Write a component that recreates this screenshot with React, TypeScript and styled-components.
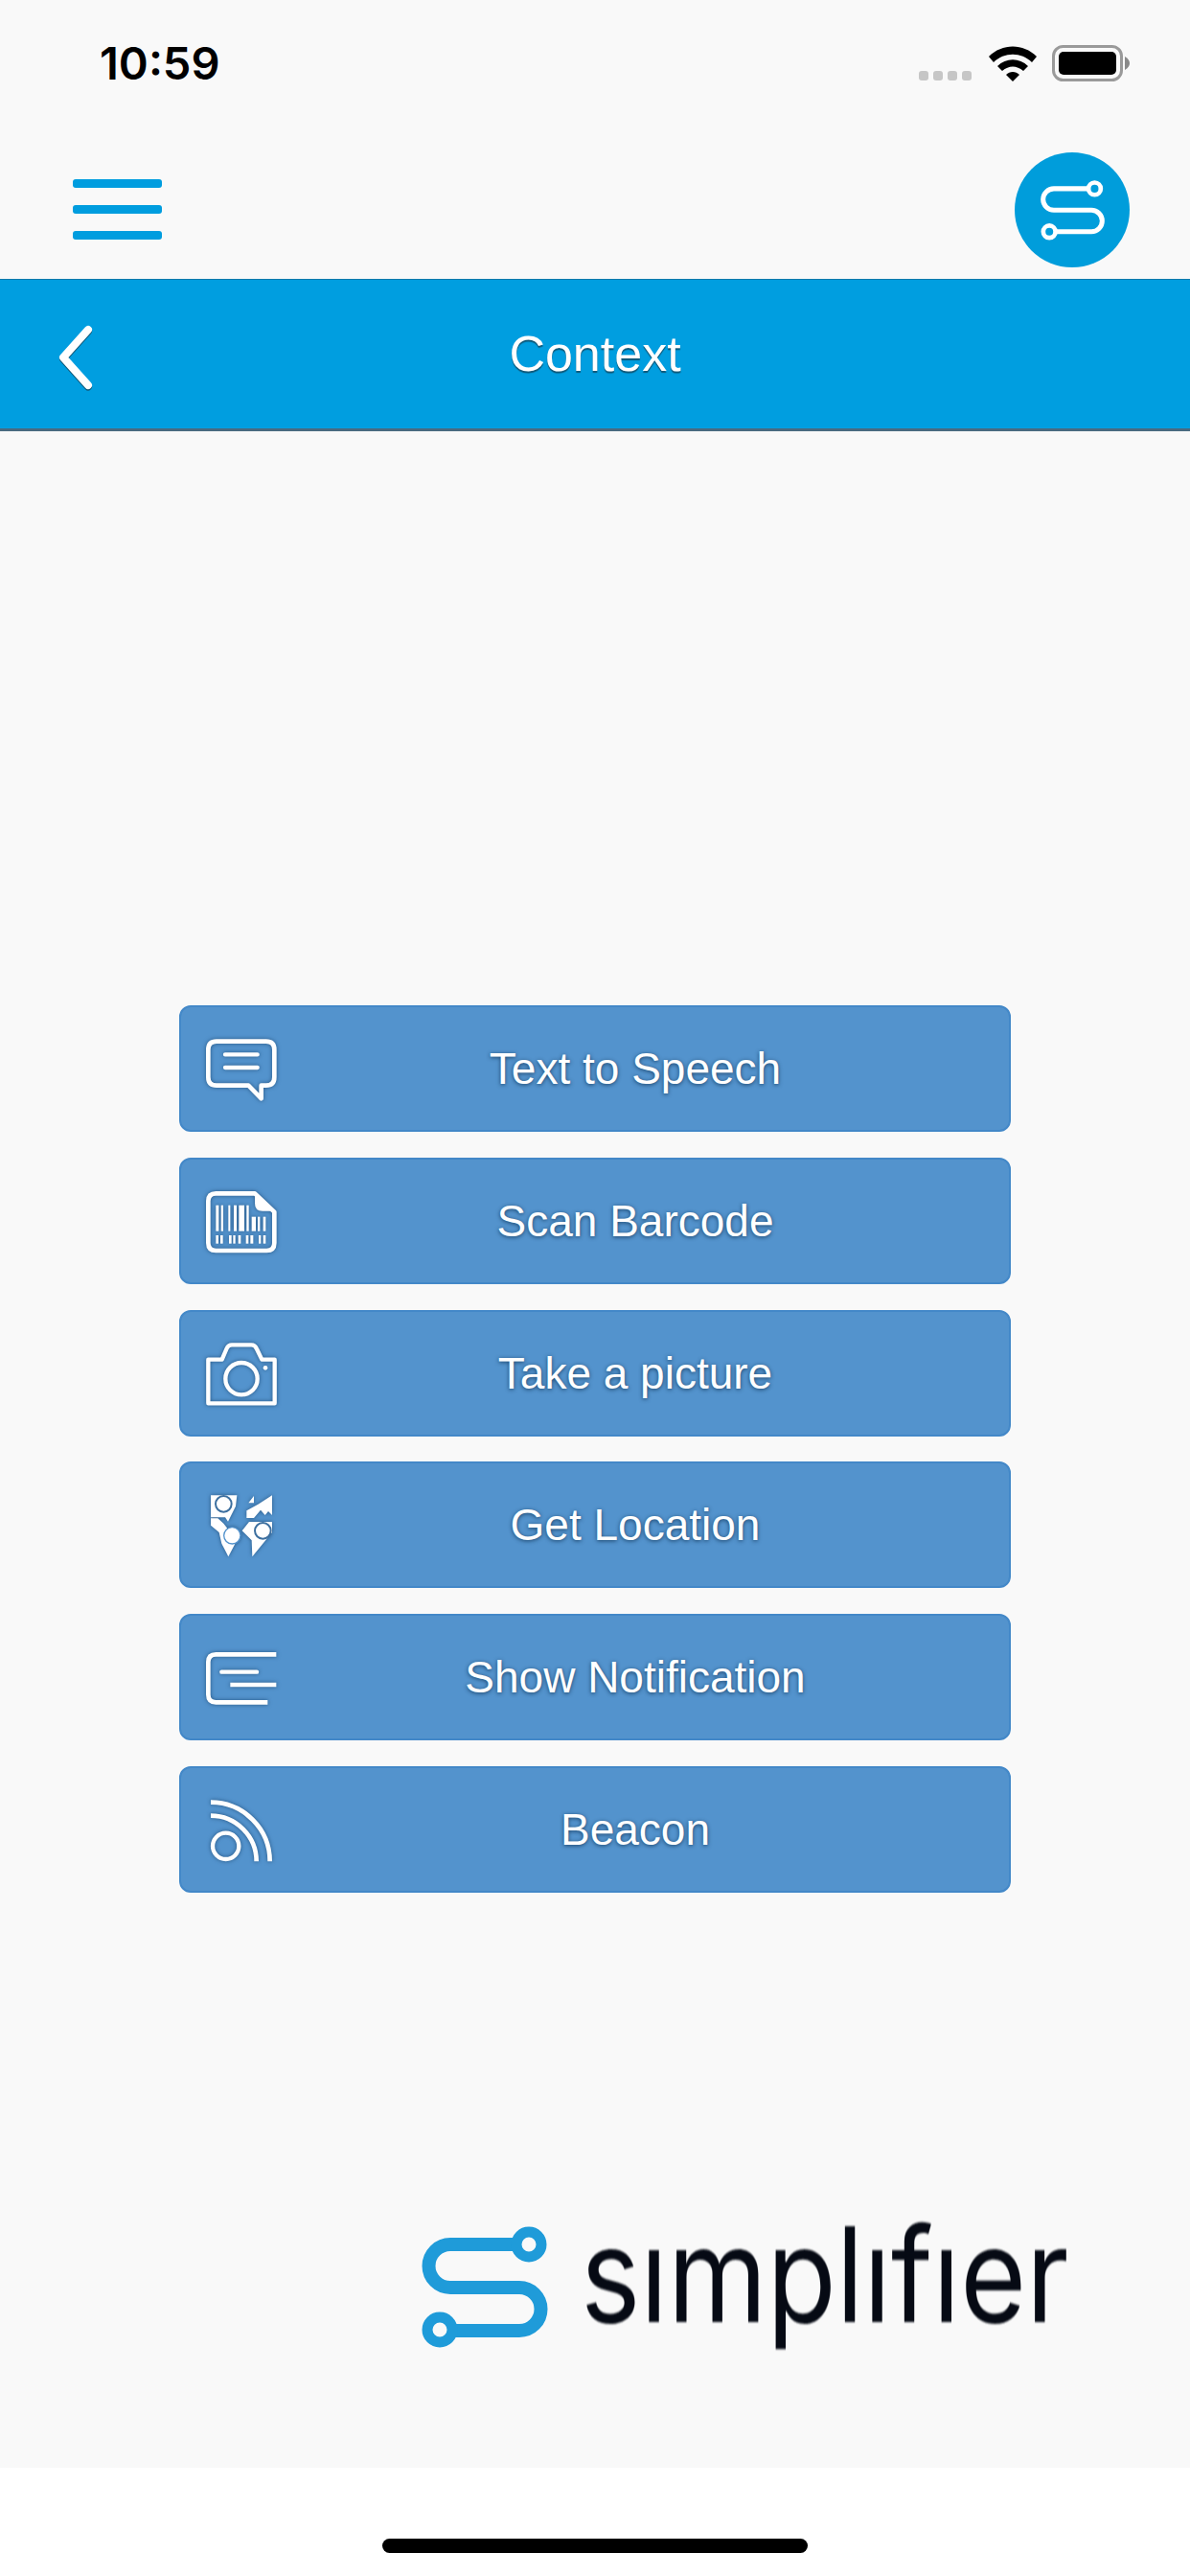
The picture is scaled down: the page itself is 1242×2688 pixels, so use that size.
import React from "react";
import styled, { createGlobalStyle } from "styled-components";

const GlobalStyle = createGlobalStyle`
  html, body {
    margin: 0;
    padding: 0;
    background: #ffffff;
  }
  * {
    box-sizing: border-box;
  }
`;

const Page = styled.div`
  width: 1242px;
  height: 2688px;
  display: flex;
  flex-direction: column;
  font-family: "Liberation Sans", Arial, sans-serif;
  background: #ffffff;
  overflow: hidden;
`;

const Screen = styled.div`
  height: 2575px;
  display: flex;
  flex-direction: column;
  background: #f9f9f9;
`;

const StatusBar = styled.div`
  height: 159px;
  flex-shrink: 0;
  display: flex;
  justify-content: space-between;
  align-items: flex-start;
  padding: 38px 62px 0 104px;
`;

const Time = styled.div`
  font-family: Inter, "Liberation Sans", sans-serif;
  font-size: 47px;
  line-height: 56px;
  font-weight: 600;
  color: #000000;
`;

const StatusIcons = styled.div`
  display: flex;
  align-items: flex-start;
  padding-top: 9px;
`;

const SignalDots = styled.div`
  display: flex;
  gap: 5px;
  margin: 27px 17px 0 0;
`;

const SignalDot = styled.span`
  width: 10px;
  height: 10px;
  border-radius: 3px;
  background: #c6c6c6;
`;

const WifiIcon = styled.svg`
  width: 52px;
  height: 38px;
  margin-right: 15px;
`;

const BatteryIcon = styled.svg`
  width: 82px;
  height: 38px;
`;

const TopBar = styled.div`
  height: 132px;
  flex-shrink: 0;
  display: flex;
  justify-content: space-between;
  padding: 0 63px 0 76px;
`;

const Hamburger = styled.div`
  display: flex;
  flex-direction: column;
  gap: 18px;
  padding-top: 28px;
`;

const HamburgerLine = styled.span`
  width: 93px;
  height: 9px;
  border-radius: 3px;
  background: #009ddf;
`;

const Badge = styled.svg`
  width: 120px;
  height: 120px;
`;

const Header = styled.div`
  height: 159px;
  flex-shrink: 0;
  position: relative;
  display: flex;
  align-items: center;
  justify-content: center;
  background: #009ee0;
  border-top: 1px solid #0079ab;
  border-bottom: 3px solid #4a6a80;
`;

const BackIcon = styled.svg`
  position: absolute;
  left: 58px;
  top: 46px;
  width: 42px;
  height: 72px;
`;

const Title = styled.h1`
  margin: 0 0 2px;
  font-size: 52px;
  line-height: 60px;
  font-weight: 400;
  color: #ffffff;
  text-shadow: 0 2px 1px #0f5878;
`;

const Main = styled.div`
  flex: 1;
  display: flex;
  flex-direction: column;
  padding-top: 599px;
`;

const ButtonList = styled.div`
  display: flex;
  flex-direction: column;
  gap: 26.8px;
  width: 868px;
  margin-left: 187px;
`;

const ActionButton = styled.div`
  height: 132px;
  flex-shrink: 0;
  display: flex;
  align-items: center;
  padding: 0 16px 0 26px;
  background: #5393cd;
  border: 2px solid #4388c8;
  border-radius: 12px;
`;

const ButtonIcon = styled.svg`
  width: 74px;
  height: 74px;
  flex-shrink: 0;
  filter: drop-shadow(0 0 2px rgba(20, 60, 100, 0.7));
`;

const ButtonLabel = styled.span`
  flex: 1;
  text-align: center;
  font-size: 46px;
  line-height: 54px;
  color: #ffffff;
  text-shadow: 0 1px 4px rgba(15, 50, 85, 0.85);
`;

const LogoRow = styled.div`
  margin-top: auto;
  display: flex;
  align-items: flex-start;
  padding: 0 0 120px 435px;
`;

const LogoMark = styled.svg`
  width: 145px;
  height: 138px;
  flex-shrink: 0;
  filter: blur(0.7px);
`;

const Wordmark = styled.div`
  margin: -27px 0 -30px 26px;
  font-family: Inter, "Noto Sans", sans-serif;
  font-size: 137px;
  line-height: 166px;
  font-variant-ligatures: none;
  color: #060a14;
  white-space: nowrap;
  transform: scaleX(0.862);
  transform-origin: left center;
  filter: blur(0.8px);
`;

const HomeArea = styled.div`
  flex: 1;
  display: flex;
  justify-content: center;
  padding-top: 74px;
`;

const HomeIndicator = styled.div`
  width: 444px;
  height: 15px;
  border-radius: 8px;
  background: #000000;
`;

const SpeechIcon = () => (
  <ButtonIcon viewBox="135 145 222 222">
    <path
      d="M168 171H323Q349 171 349 197V283Q349 309 323 309H308V350L268 309H168Q142 309 142 283V197Q142 171 168 171Z"
      fill="none"
      stroke="#fff"
      strokeWidth="14"
      strokeLinejoin="round"
    />
    <path d="M195 212H296M195 253H296" stroke="#fff" strokeWidth="13" strokeLinecap="round" />
  </ButtonIcon>
);

const tallBars = [
  [166, 9, 684],
  [182, 7, 684],
  [205, 6, 684],
  [222, 9, 684],
  [238, 17, 684],
  [262, 7, 684],
  [278, 13, 720],
  [297, 7, 720],
  [314, 8, 720],
];
const shortBars = [
  [166, 8],
  [180, 8],
  [207, 8],
  [220, 7],
  [236, 8],
  [260, 8],
  [274, 9],
  [300, 7],
  [314, 8],
];

const BarcodeIcon = () => (
  <ButtonIcon viewBox="135 622 222 222">
    <path
      d="M166 647H288L349 705V802Q349 826 325 826H166Q142 826 142 802V671Q142 647 166 647Z"
      fill="none"
      stroke="#fff"
      strokeWidth="14"
      strokeLinejoin="round"
    />
    <path d="M288 647L349 702H312Q288 702 288 678Z" fill="#fff" />
    {tallBars.map(([x, w, y]) => (
      <rect key={x} x={x} y={y} width={w} height={765 - y} fill="#fff" />
    ))}
    {shortBars.map(([x, w]) => (
      <rect key={x} x={x} y={778} width={w} height={26} fill="#fff" />
    ))}
  </ButtonIcon>
);

const CameraIcon = () => (
  <ButtonIcon viewBox="135 139 222 222">
    <path
      d="M142 344V207H185L200 172Q205 161 216 161H277Q288 161 293 172L310 207H350V344Z"
      fill="none"
      stroke="#fff"
      strokeWidth="13"
      strokeLinejoin="round"
    />
    <circle cx="246" cy="267" r="50" fill="none" stroke="#fff" strokeWidth="13" />
    <circle cx="321" cy="233" r="7" fill="#fff" />
  </ButtonIcon>
);

const LocationIcon = () => (
  <ButtonIcon viewBox="135 615 222 222">
    <path d="M150 634H232L228 668L204 716L195 703H150Z" fill="#fff" />
    <path d="M150 706H172L190 722L200 735L226 786L205 826L184 785L176 750L150 728Z" fill="#fff" />
    <path d="M268 658L285 636V658ZM262 705V682L298 662L342 634V696L330 684L320 696L306 680L285 705Z" fill="#fff" />
    <path d="M248 745L270 717H342V750L280 826L278 775Z" fill="#fff" />
    <circle cx="190" cy="661" r="25" fill="#fff" stroke="#3c6f9f" strokeWidth="6" />
    <circle cx="217" cy="760" r="26" fill="#fff" stroke="#5393cd" strokeWidth="4" />
    <circle cx="313" cy="745" r="25" fill="#fff" stroke="#3c6f9f" strokeWidth="6" />
  </ButtonIcon>
);

const NotificationIcon = () => (
  <ButtonIcon viewBox="135 132 222 222">
    <path
      d="M355 172H166Q142 172 142 196V298Q142 322 166 322H328"
      fill="none"
      stroke="#fff"
      strokeWidth="14"
    />
    <path d="M184 227H294" stroke="#fff" strokeWidth="13" strokeLinecap="round" />
    <path d="M211 267H355" stroke="#fff" strokeWidth="13" />
  </ButtonIcon>
);

const BeaconIcon = () => (
  <ButtonIcon viewBox="135 608 222 222">
    <path
      d="M150 634A185 185 0 0 1 335 819M150 676A143 143 0 0 1 293 819"
      fill="none"
      stroke="#fff"
      strokeWidth="14"
    />
    <circle cx="197" cy="771" r="41" fill="none" stroke="#fff" strokeWidth="13" />
  </ButtonIcon>
);

const actions = [
  { label: "Text to Speech", icon: <SpeechIcon /> },
  { label: "Scan Barcode", icon: <BarcodeIcon /> },
  { label: "Take a picture", icon: <CameraIcon /> },
  { label: "Get Location", icon: <LocationIcon /> },
  { label: "Show Notification", icon: <NotificationIcon /> },
  { label: "Beacon", icon: <BeaconIcon /> },
];

const App = () => {
  return (
    <Page>
      <GlobalStyle />
      <Screen>
        <StatusBar>
          <Time>10:59</Time>
          <StatusIcons>
            <SignalDots>
              <SignalDot />
              <SignalDot />
              <SignalDot />
              <SignalDot />
            </SignalDots>
            <WifiIcon viewBox="0 0 52 38">
              <path d="M1 12C15 -2 37 -2 51 12L46 18C35 7 17 7 6 18Z" fill="#000" />
              <path d="M10 22C19 13 33 13 42 22L37 27C30 21 22 21 15 27Z" fill="#000" />
              <path d="M19 31C23 27 29 27 33 31L26 38Z" fill="#000" />
            </WifiIcon>
            <BatteryIcon viewBox="0 0 82 38">
              <rect x="1.5" y="1.5" width="71" height="35" rx="10" fill="none" stroke="#9a9a9a" strokeWidth="3" />
              <rect x="7" y="7" width="60" height="24" rx="5" fill="#000" />
              <path d="M76 12Q81 15 81 19Q81 23 76 26Z" fill="#8a8a8a" />
            </BatteryIcon>
          </StatusIcons>
        </StatusBar>
        <TopBar>
          <Hamburger>
            <HamburgerLine />
            <HamburgerLine />
            <HamburgerLine />
          </Hamburger>
          <Badge viewBox="358 416 358 358">
            <circle cx="537" cy="595" r="179" fill="#009ddb" />
            <path
              d="M587 529H480A33 33 0 0 0 480 596H597A33.5 33.5 0 0 1 597 663H487"
              fill="none"
              stroke="#fff"
              strokeWidth="15"
            />
            <circle cx="607" cy="529" r="19" fill="none" stroke="#fff" strokeWidth="14" />
            <circle cx="466" cy="663" r="19" fill="none" stroke="#fff" strokeWidth="14" />
          </Badge>
        </TopBar>
        <Header>
          <BackIcon viewBox="0 0 42 72">
            <path
              d="M34 6L8 35L34 64"
              fill="none"
              stroke="#0f5878"
              strokeWidth="8"
              strokeLinecap="round"
              strokeLinejoin="round"
              transform="translate(0 1.5)"
            />
            <path
              d="M34 6L8 35L34 64"
              fill="none"
              stroke="#fff"
              strokeWidth="8"
              strokeLinecap="round"
              strokeLinejoin="round"
            />
          </BackIcon>
          <Title>Context</Title>
        </Header>
        <Main>
          <ButtonList>
            {actions.map((action) => (
              <ActionButton key={action.label}>
                {action.icon}
                <ButtonLabel>{action.label}</ButtonLabel>
              </ActionButton>
            ))}
          </ButtonList>
          <LogoRow>
            <LogoMark viewBox="435 2317 145 138">
              <path
                d="M552 2342H470A22.5 22.5 0 0 0 470 2387H542A22.5 22.5 0 0 1 542 2432H459"
                fill="none"
                stroke="#1f9bd9"
                strokeWidth="14"
              />
              <circle cx="552" cy="2342" r="13" fill="#f9f9f9" stroke="#1f9bd9" strokeWidth="11" />
              <circle cx="459" cy="2431" r="13" fill="#f9f9f9" stroke="#1f9bd9" strokeWidth="11" />
            </LogoMark>
            <Wordmark>sımplıfıer</Wordmark>
          </LogoRow>
        </Main>
      </Screen>
      <HomeArea>
        <HomeIndicator />
      </HomeArea>
    </Page>
  );
};

export default App;
